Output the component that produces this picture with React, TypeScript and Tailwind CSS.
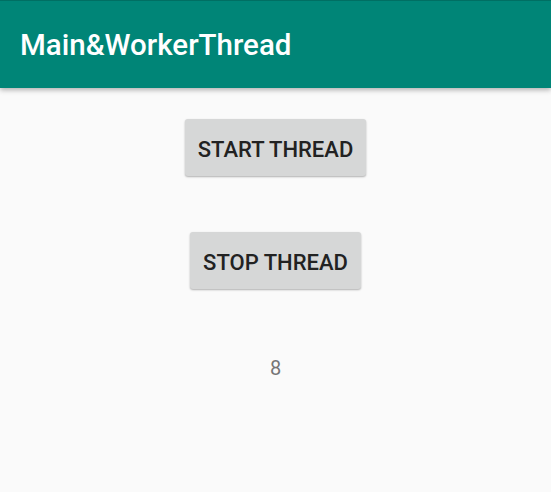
export default function App() {
  return (
    <div
      className="w-[551px] h-[492px] bg-[#fafafa] flex flex-col overflow-hidden"
      style={{ fontFamily: "Roboto, 'Noto Sans', sans-serif" }}
    >
      {/* App bar */}
      <div className="h-[88px] shrink-0 bg-[#008577] border-t border-[#006f63] flex items-center pl-5 shadow-[0_2px_5px_rgba(0,0,0,0.3)] relative z-10">
        <h1 className="text-[29.5px] font-medium text-white leading-none pt-[2px]">Main&amp;WorkerThread</h1>
      </div>

      <div className="flex flex-col items-center">
        <button className="mt-[31px] h-[57px] px-[13px] pt-[3px] bg-[#d6d7d7] rounded-[3px] shadow-[0_1px_2px_rgba(0,0,0,0.3)] text-[22px] font-medium text-[#222222]">
          START THREAD
        </button>
        <button className="mt-[56px] h-[57px] px-[13px] pt-[3px] bg-[#d6d7d7] rounded-[3px] shadow-[0_1px_2px_rgba(0,0,0,0.3)] text-[22px] font-medium text-[#222222]">
          STOP THREAD
        </button>
        <span className="mt-[64px] text-[20px] text-[#757575]">8</span>
      </div>
    </div>
  );
}
